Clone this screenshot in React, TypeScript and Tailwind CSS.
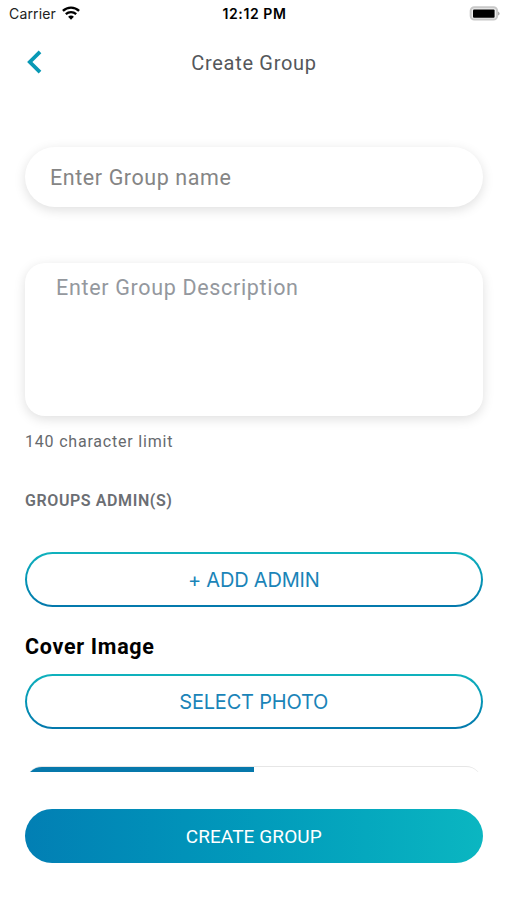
import type { ReactNode } from 'react'

function StatusBar() {
  return (
    <div className="grid h-7 grid-cols-3 items-center pl-[9px] pr-[7px] font-['Inter',sans-serif] text-black">
      <div className="flex items-center gap-[6px]">
        <span className="text-[14px] leading-none tracking-[0.15px] text-[#222]">Carrier</span>
        <svg className="mb-[2px] h-[14px] w-[18px]" viewBox="0 0 18 14" fill="none" stroke="#000">
          <path d="M.9 4.9C5.5.5 12.5.5 17.1 4.9" strokeWidth="2.4" />
          <path d="M3.8 8.1c3-2.7 7.4-2.7 10.4 0" strokeWidth="2.3" />
          <path d="M9 13.8 6.1 10.7c1.6-1.5 4.2-1.5 5.8 0Z" fill="#000" stroke="none" />
        </svg>
      </div>
      <span className="text-center text-[14px] font-semibold leading-none tracking-[0.6px]">12:12 PM</span>
      <svg className="mb-[2px] h-[15px] w-[31px] justify-self-end" viewBox="0 0 31 15">
        <rect x="1.7" y="1.2" width="26.4" height="12.4" rx="3.6" fill="#eee" stroke="#c8c8c8" strokeWidth="2" />
        <rect x="4" y="3.4" width="21.6" height="8.4" rx="1" fill="#000" />
        <path d="M29.2 5.4c1.8.8 1.8 3.4 0 4.2Z" fill="#999" />
      </svg>
    </div>
  )
}

function OutlineButton({ children }: { children: ReactNode }) {
  return (
    <button className="block h-[55px] w-full rounded-full bg-linear-to-b from-[#10b2bd] to-[#0478ac] p-[2px]">
      <span className="flex h-full items-center justify-center whitespace-nowrap rounded-full bg-white font-['Inter',sans-serif] text-[20px] font-normal tracking-[-0.2px] text-[#1a84b8]">
        {children}
      </span>
    </button>
  )
}

export default function App() {
  return (
    <div className="h-[900px] w-[507px] overflow-hidden bg-white font-['Roboto',sans-serif]">
      <StatusBar />

      <header className="grid h-[69px] grid-cols-[60px_1fr_60px] items-center">
        <button className="mb-[2px] ml-[26px] w-4" aria-label="Back">
          <svg className="h-[24px] w-[16px]" viewBox="0 0 16 24" fill="none" stroke="#0899b5" strokeWidth="3.8">
            <path d="M14 1.8 3.8 12 14 22.2" />
          </svg>
        </button>
        <h1 className="pl-px pt-px text-center text-[20px] leading-6 tracking-[0.7px] text-[#54575b]">Create Group</h1>
      </header>

      <main className="mt-[50px] pl-[25px] pr-[24.5px]">
        <div className="flex h-[60px] items-center rounded-full bg-white pl-[25px] pt-[2px] shadow-[0_3px_12px_rgba(0,0,0,0.13)]">
          <span className="text-[21.5px] leading-6 tracking-[0.58px] text-[#858585]">Enter Group name</span>
        </div>

        <div className="mt-[56px] h-[153px] rounded-[20px] bg-white pl-[31px] pt-[13px] shadow-[0_3px_12px_rgba(0,0,0,0.13)]">
          <span className="block text-[21.5px] leading-6 tracking-[0.67px] text-[#94989e]">Enter Group Description</span>
        </div>

        <p className="mt-[16px] text-[16px] leading-5 tracking-[0.8px] text-[#66696d]">140 character limit</p>
        <h2 className="mt-[39px] text-[16px] font-semibold leading-5 tracking-[0.6px] text-[#6b6e73]">GROUPS ADMIN(S)</h2>

        <div className="mt-[41px]">
          <OutlineButton>+ ADD ADMIN</OutlineButton>
        </div>

        <h2 className="mt-[26px] text-[21.5px] font-bold leading-7 tracking-[0.7px] text-black">Cover Image</h2>
        <div className="mt-[13px]">
          <OutlineButton>SELECT PHOTO</OutlineButton>
        </div>

        {/* upload progress, half done */}
        <div className="mt-[37px] h-[6px] overflow-hidden px-px">
          <div className="h-8 overflow-hidden rounded-[16px] border-t border-[#e6e6e6]">
            <div className="h-[5px] w-1/2 bg-[#0678ab]" />
          </div>
        </div>

        <button className="mt-[37px] flex h-[54px] w-full items-center justify-center rounded-full bg-linear-to-r from-[#027fb4] to-[#0bb6c1] pt-px">
          <span className="text-[19px] leading-6 tracking-[0.1px] text-white">CREATE GROUP</span>
        </button>
      </main>
    </div>
  )
}
